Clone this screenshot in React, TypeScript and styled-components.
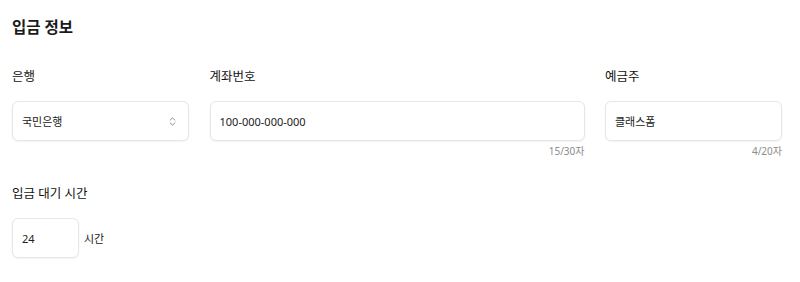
import React from 'react';
import styled, { createGlobalStyle } from 'styled-components';
import { ChevronsUpDown } from 'lucide-react';

const GlobalStyle = createGlobalStyle`
  body {
    margin: 0;
    background: #ffffff;
    font-family: "Noto Sans", "Noto Sans CJK KR", sans-serif;
    color: #1f1f1f;
  }
`;

const Page = styled.div`
  padding: 17px 18px 20px 12px;
`;

const Title = styled.h2`
  margin: 0 0 31px;
  font-size: 15.5px;
  line-height: 20px;
  font-weight: 600;
  color: #1a1a1a;
`;

const Row = styled.div`
  display: grid;
  grid-template-columns: 177px 375px 177px;
  column-gap: 20.5px;
  margin-bottom: 27px;
`;

const Field = styled.div`
  display: flex;
  flex-direction: column;
`;

const Label = styled.label`
  font-size: 12.5px;
  line-height: 18px;
  font-weight: 400;
  color: #111;
  margin-bottom: 15px;
`;

const Box = styled.div<{ $width?: number }>`
  box-sizing: border-box;
  height: 40px;
  width: ${p => (p.$width ? `${p.$width}px` : '100%')};
  border: 1px solid #e6e6e6;
  border-radius: 6px;
  box-shadow: 0 1px 2px rgba(0, 0, 0, 0.05);
  background: #fff;
  display: flex;
  align-items: center;
  justify-content: space-between;
  padding: 0 10px 0 9px;
  font-size: 11px;
  color: #222;
`;

const Counter = styled.div`
  margin-top: 3px;
  text-align: right;
  font-size: 10px;
  line-height: 14px;
  color: #8c8c8c;
`;

const InlineRow = styled.div`
  display: flex;
  align-items: center;
  gap: 5px;
`;

const Unit = styled.span`
  font-size: 11px;
  color: #222;
`;

export default function App() {
  return (
    <>
      <GlobalStyle />
      <Page>
        <Title>입금 정보</Title>
        <Row>
          <Field>
            <Label>은행</Label>
            <Box>
              <span>국민은행</span>
              <ChevronsUpDown size={11} color="#666" strokeWidth={1.6} />
            </Box>
          </Field>
          <Field>
            <Label>계좌번호</Label>
            <Box>100-000-000-000</Box>
            <Counter>15/30자</Counter>
          </Field>
          <Field>
            <Label>예금주</Label>
            <Box>클래스폼</Box>
            <Counter>4/20자</Counter>
          </Field>
        </Row>
        <Field>
          <Label>입금 대기 시간</Label>
          <InlineRow>
            <Box $width={67}>24</Box>
            <Unit>시간</Unit>
          </InlineRow>
        </Field>
      </Page>
    </>
  );
}
